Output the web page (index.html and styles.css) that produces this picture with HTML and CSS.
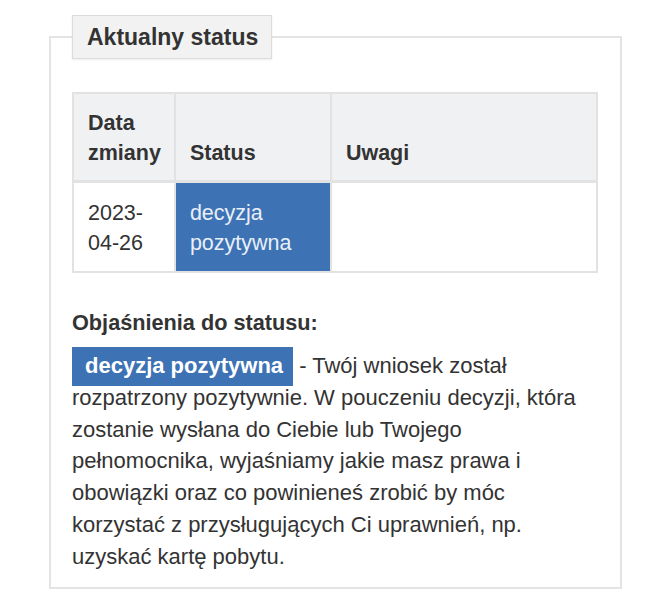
FILE: index.html
```html
<!DOCTYPE html>
<html lang="pl">
<head>
<meta charset="utf-8">
<title>Aktualny status</title>
<link rel="stylesheet" href="styles.css">
</head>
<body>
<fieldset class="status-box">
  <legend class="status-legend">Aktualny status</legend>
  <table class="status-table">
    <thead>
      <tr>
        <th class="col-date">Data zmiany</th>
        <th class="col-status">Status</th>
        <th class="col-notes">Uwagi</th>
      </tr>
    </thead>
    <tbody>
      <tr>
        <td>2023-04-26</td>
        <td class="cell-positive">decyzja pozytywna</td>
        <td></td>
      </tr>
    </tbody>
  </table>
  <h4 class="explain-title">Objaśnienia do statusu:</h4>
  <p class="explain-text"><span class="badge">decyzja pozytywna</span> - Twój wniosek został rozpatrzony pozytywnie. W pouczeniu decyzji, która zostanie wysłana do Ciebie lub Twojego pełnomocnika, wyjaśniamy jakie masz prawa i obowiązki oraz co powinieneś zrobić by móc korzystać z przysługujących Ci uprawnień, np. uzyskać kartę pobytu.</p>
</fieldset>
</body>
</html>
```
FILE: styles.css
```css
html, body {
  margin: 0;
  padding: 0;
  background: #ffffff;
}

body {
  font-family: "Liberation Sans", Arial, Helvetica, sans-serif;
  color: #333333;
  padding: 15px 28px 0 49px;
}

.status-box {
  margin: 0;
  border: 2px solid #e4e4e4;
  padding: 0 22px 14px 21px;
  min-width: 0;
}

.status-legend {
  margin: 0;
  padding: 0 13px 0 14px;
  background: #f2f2f2;
  border: 1px solid #dcdcdc;
  box-shadow: 0 1px 2px rgba(0, 0, 0, 0.08);
  font-weight: bold;
  font-size: 23px;
  line-height: 42px;
  color: #333333;
}

.status-table {
  margin-top: 33px;
  width: 526px;
  border-collapse: collapse;
  font-size: 21.5px;
  line-height: 30px;
}

.status-table th,
.status-table td {
  border: 2px solid #e2e2e2;
  text-align: left;
}

.status-table th {
  background: #f0f1f3;
  font-weight: bold;
  vertical-align: bottom;
  border-bottom-width: 3px;
  padding: 14px 13px 12px 14px;
}

.status-table td {
  vertical-align: top;
  padding: 15px 13px 13px 14px;
}

.col-date { width: 71px; }
.col-status { width: 127px; }

.cell-positive {
  background: #3d72b4;
  color: #e9eff8;
}

.explain-title {
  margin: 35px 0 12px 0;
  font-size: 21.7px;
  line-height: 30px;
  font-weight: bold;
}

.explain-text {
  margin: 0;
  font-size: 22px;
  line-height: 31.8px;
}

.badge {
  background: #3d72b4;
  color: #ffffff;
  font-weight: bold;
  font-size: 22px;
  padding: 6px 10px 8px 13px;
}
```
